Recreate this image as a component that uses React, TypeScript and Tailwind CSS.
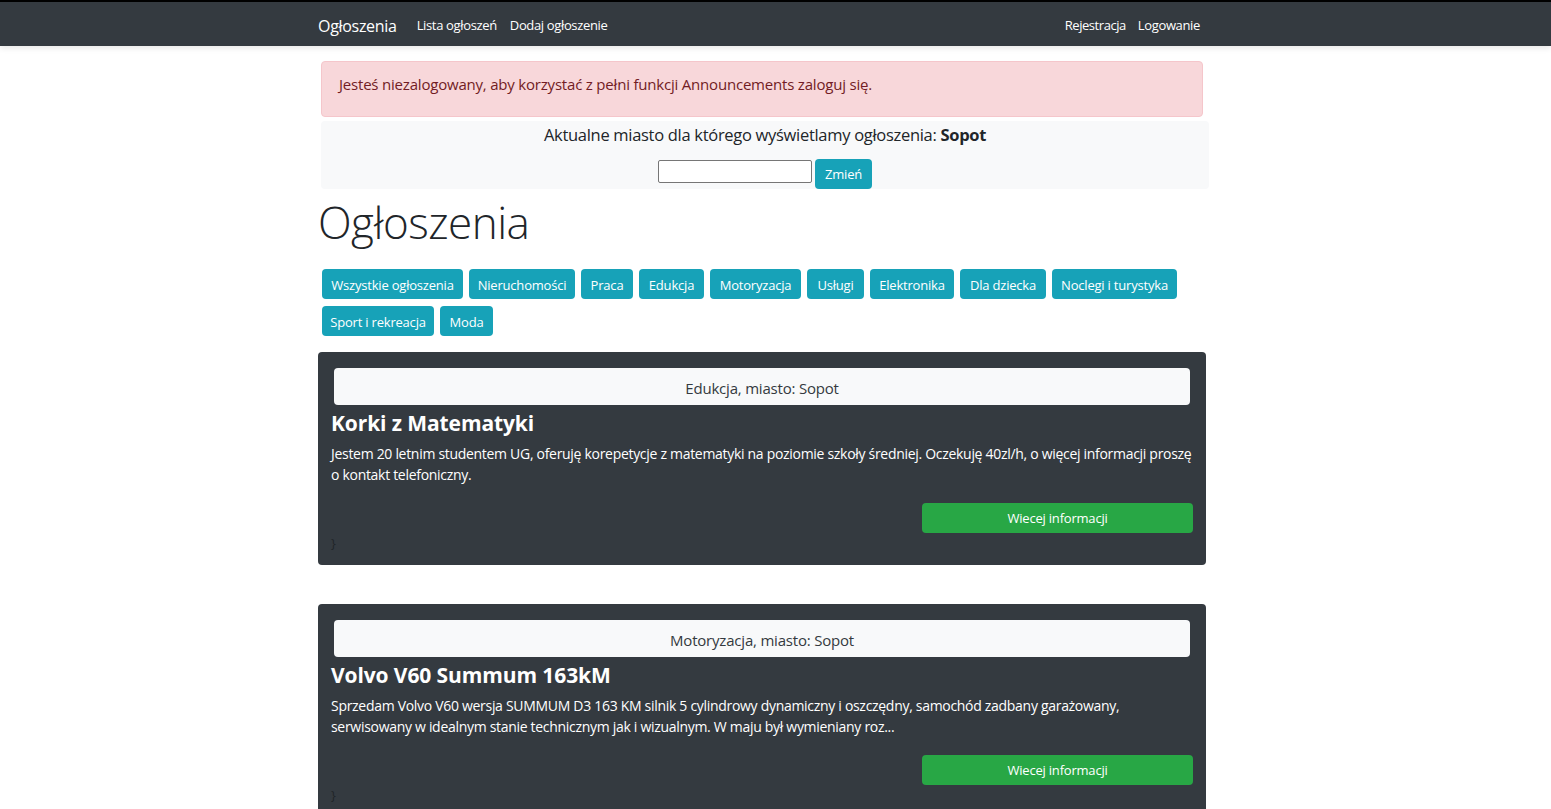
const categories = [
  { name: 'Wszystkie ogłoszenia', w: 'w-[141px]' },
  { name: 'Nieruchomości', w: 'w-[106px]' },
  { name: 'Praca', w: 'w-[52px]' },
  { name: 'Edukcja', w: 'w-[65px]' },
  { name: 'Motoryzacja', w: 'w-[91px]' },
  { name: 'Usługi', w: 'w-[57px]' },
  { name: 'Elektronika', w: 'w-[84px]' },
  { name: 'Dla dziecka', w: 'w-[86px]' },
  { name: 'Noclegi i turystyka', w: 'w-[125px]' },
  { name: 'Sport i rekreacja', w: 'w-[112px]' },
  { name: 'Moda', w: 'w-[53px]' },
]

const announcements = [
  {
    id: 1,
    category: 'Edukcja',
    city: 'Sopot',
    title: 'Korki z Matematyki',
    lines: [
      'Jestem 20 letnim studentem UG, oferuję korepetycje z matematyki na poziomie szkoły średniej. Oczekuję 40zl/h, o więcej informacji proszę',
      'o kontakt telefoniczny.',
    ],
  },
  {
    id: 2,
    category: 'Motoryzacja',
    city: 'Sopot',
    title: 'Volvo V60 Summum 163kM',
    lines: [
      'Sprzedam Volvo V60 wersja SUMMUM D3 163 KM silnik 5 cylindrowy dynamiczny i oszczędny, samochód zadbany garażowany,',
      'serwisowany w idealnym stanie technicznym jak i wizualnym. W maju był wymieniany roz...',
    ],
  },
]

function Navbar() {
  return (
    <nav className="border-t-2 border-black bg-[#343a40] h-[46px] shadow-[0_2px_6px_rgba(0,0,0,0.1)] relative">
      <div className="ml-[318px] w-[882px] h-[44px] pt-[3px] flex items-center">
        <span className="text-white text-[16px] tracking-[-0.3px] mr-[20px]">Ogłoszenia</span>
        <a className="text-white text-[13px] tracking-[-0.35px] mr-[13px]">Lista ogłoszeń</a>
        <a className="text-white text-[13px] tracking-[-0.35px]">Dodaj ogłoszenie</a>
        <div className="ml-auto flex gap-[12px]">
          <a className="text-white text-[13px] tracking-[-0.45px]">Rejestracja</a>
          <a className="text-white text-[13px] tracking-[-0.35px]">Logowanie</a>
        </div>
      </div>
    </nav>
  )
}

function AnnouncementCard({ item }: { item: typeof announcements[number] }) {
  return (
    <div className="bg-[#343a40] rounded-[4px] pt-[16px] pb-[11px] px-[13px]">
      <div className="mx-[3px] h-[37px] pt-[3px] bg-[#f8f9fa] rounded-[4px] flex items-center justify-center text-[15px] tracking-[-0.2px] text-[#343a40]">
        {item.category}, miasto: {item.city}
      </div>
      <h3 className="mt-[4px] text-white font-bold text-[21px] leading-[29px] tracking-[-0.1px]">{item.title}</h3>
      <p className="mt-[5px] text-white text-[14px] leading-[21px] tracking-[-0.3px] whitespace-nowrap">
        {item.lines[0]}
        <br />
        {item.lines[1]}
      </p>
      <div className="mt-[18px] flex justify-end">
        <button className="w-[271px] h-[30px] pt-[2px] bg-[#28a745] rounded-[4px] text-white text-[13px] tracking-[-0.2px]">
          Wiecej informacji
        </button>
      </div>
      <div className="text-[#212529] text-[13px] leading-[21px]">{'}'}</div>
    </div>
  )
}

export default function App() {
  return (
    <div className="min-h-screen bg-white font-['Open_Sans',sans-serif] text-[#212529]">
      <Navbar />
      <main className="ml-[318px] w-[888px] pt-[15px]">
        <div className="mx-[3px] h-[56px] bg-[#f8d7da] border border-[#f5c6cb] rounded-[4px] px-[17px] pt-[10px] text-[#721c24] text-[15px] leading-[24px] tracking-[-0.2px]">
          Jesteś niezalogowany, aby korzystać z pełni funkcji Announcements zaloguj się.
        </div>
        <div className="mt-[4px] ml-[3px] w-[888px] h-[68px] bg-[#f8f9fa] rounded-[4px] flex flex-col items-center">
          <p className="text-[16.5px] leading-[27px] tracking-[-0.3px]">
            Aktualne miasto dla którego wyświetlamy ogłoszenia: <b className="font-bold">Sopot</b>
          </p>
          <div className="mt-[11px] flex items-start gap-[3px]">
            <input className="mt-[1px] w-[154px] h-[23px] bg-white border border-[#767676] rounded-[2px]" />
            <button className="w-[57px] h-[30px] pt-[2px] bg-[#17a2b8] rounded-[4px] text-white text-[13px] tracking-[-0.2px]">Zmień</button>
          </div>
        </div>
        <h1 className="mt-[7px] text-[44px] leading-[53px] font-light tracking-[-0.5px]">Ogłoszenia</h1>
        <div className="mt-[20px] ml-[4px] flex flex-wrap gap-x-[6px] gap-y-[7px]">
          {categories.map(c => (
            <button key={c.name} className={`${c.w} h-[30px] pt-[3px] bg-[#17a2b8] rounded-[4px] text-white text-[13px] tracking-[-0.2px] whitespace-nowrap`}>
              {c.name}
            </button>
          ))}
        </div>
        <div className="mt-[16px] flex flex-col gap-[39px]">
          {announcements.map(a => <AnnouncementCard key={a.id} item={a} />)}
        </div>
      </main>
    </div>
  )
}
